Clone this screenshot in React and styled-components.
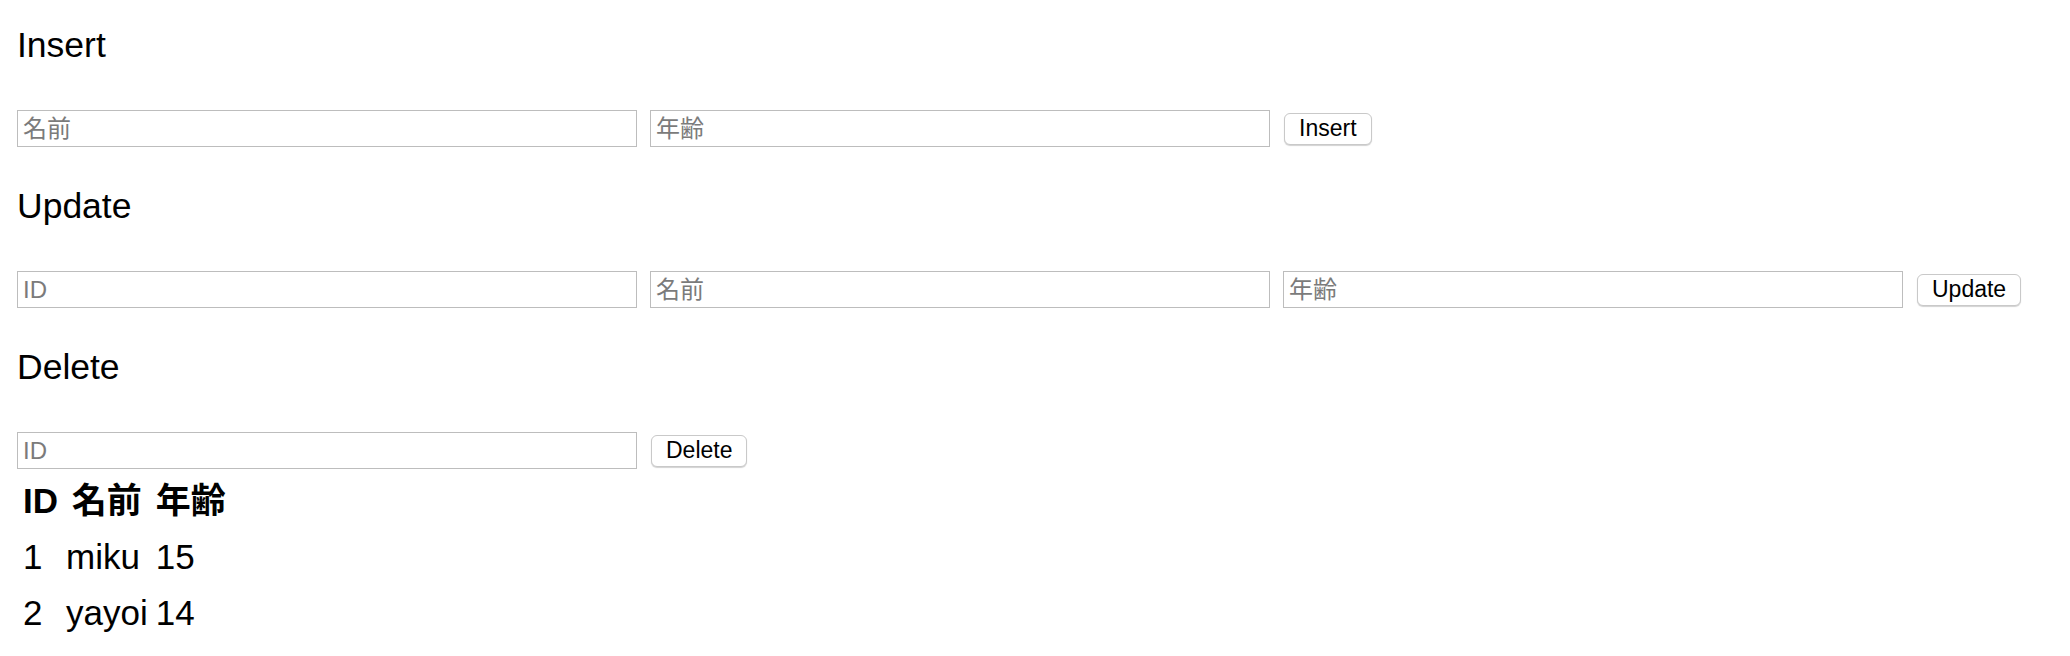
import styled, { createGlobalStyle } from 'styled-components'

const GlobalStyle = createGlobalStyle`
  body {
    margin: 0;
    background: #ffffff;
    color: #000000;
    font-family: "Liberation Sans", "Noto Sans CJK JP", sans-serif;
  }
`

const users = [
  { id: 1, name: 'miku', age: 15 },
  { id: 2, name: 'yayoi', age: 14 },
]

const forms = [
  { title: 'Insert', fields: ['名前', '年齢'] },
  { title: 'Update', fields: ['ID', '名前', '年齢'] },
  { title: 'Delete', fields: ['ID'] },
]

const App = () => {
  return (
    <Page>
      <GlobalStyle />
      {forms.map((form) => (
        <Section key={form.title}>
          <Heading>{form.title}</Heading>
          <FormRow>
            {form.fields.map((field) => (
              <TextInput key={field} type='text' placeholder={field} />
            ))}
            <ActionButton type='button'>{form.title}</ActionButton>
          </FormRow>
        </Section>
      ))}
      <DataTable>
        <thead>
          <tr>
            <HeadCell>ID</HeadCell>
            <HeadCell>名前</HeadCell>
            <HeadCell>年齢</HeadCell>
          </tr>
        </thead>
        <tbody>
          {users.map((user) => (
            <tr key={user.id}>
              <Cell>{user.id}</Cell>
              <Cell>{user.name}</Cell>
              <Cell>{user.age}</Cell>
            </tr>
          ))}
        </tbody>
      </DataTable>
    </Page>
  )
}

export default App

const Page = styled.div`
  padding: 21px 17px 0;
`

const Section = styled.section`
  & + & {
    margin-top: 35px;
  }
`

const Heading = styled.h3`
  margin: 0;
  font-size: 35.5px;
  line-height: 48px;
  font-weight: 400;
`

const FormRow = styled.div`
  display: flex;
  align-items: center;
  gap: 13px;
  margin-top: 41px;
`

const TextInput = styled.input`
  box-sizing: border-box;
  flex-shrink: 0;
  width: 620px;
  height: 37px;
  margin: 0;
  padding: 0 5px;
  border: 1px solid #bdbdbd;
  border-radius: 0;
  background: #ffffff;
  font-family: "Liberation Sans", "Noto Sans CJK JP", sans-serif;
  font-size: 24px;
  color: #000000;

  &::placeholder {
    color: #7b7b7b;
  }
`

const ActionButton = styled.button`
  box-sizing: border-box;
  height: 32px;
  margin-left: 1px;
  padding: 0 14px;
  border: 1px solid #c9c9c9;
  border-radius: 6px;
  background: #ffffff;
  box-shadow: 0 1px 1px rgba(0, 0, 0, 0.18);
  font-family: "Liberation Sans", "Noto Sans CJK JP", sans-serif;
  font-size: 23px;
  line-height: 1;
  color: #000000;
`

const DataTable = styled.table`
  margin-top: 2px;
  border-spacing: 4px;
  font-size: 35px;
  line-height: 48px;
`

const HeadCell = styled.th`
  padding: 2px;
  font-weight: 700;
  text-align: center;
`

const Cell = styled.td`
  padding: 2px;
  text-align: left;
`
